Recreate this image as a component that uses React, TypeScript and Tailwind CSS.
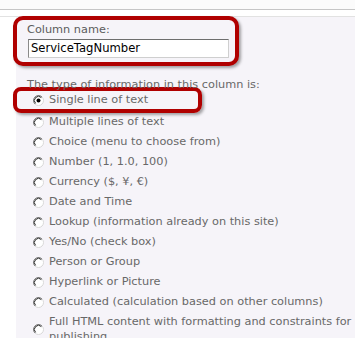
import React from "react"

function Radio({ checked }: { checked?: boolean }) {
    return (
        <svg width="11" height="11" viewBox="0 0 11 11" className="shrink-0">
            <circle cx="5.5" cy="5.5" r="5" fill="#ffffff" />
            <path d="M1.96 9.04A5 5 0 0 1 9.04 1.96" fill="none" stroke="#7a7a7a" strokeWidth="1" />
            <path d="M2.6 8.4A4.1 4.1 0 0 1 8.4 2.6" fill="none" stroke="#2a2a2a" strokeWidth="1" />
            <path d="M9.04 1.96A5 5 0 0 1 1.96 9.04" fill="none" stroke="#d8d8d8" strokeWidth="1" />
            {checked && <circle cx="5.5" cy="5.5" r="2" fill="#000000" />}
        </svg>
    )
}

const options = [
    "Multiple lines of text",
    "Choice (menu to choose from)",
    "Number (1, 1.0, 100)",
    "Currency ($, ¥, €)",
    "Date and Time",
    "Lookup (information already on this site)",
    "Yes/No (check box)",
    "Person or Group",
    "Hyperlink or Picture",
    "Calculated (calculation based on other columns)",
]

export default function App() {
    return (
        <div className="w-[355px] h-[338px] overflow-hidden bg-white text-[11.3px] text-[#686868]" style={{ fontFamily: '"DejaVu Sans", Verdana, sans-serif' }}>
            <div className="h-[10px] bg-[#fbfbfb] border-b border-[#c6c6c6]" />
            <div className="h-[7px] bg-white border-b border-[#e2e2e2]" />
            <div className="flex h-full">
                <div className="w-[16px] shrink-0 bg-white" />
                <div className="flex-1 bg-[#f6f4f9]">
                    <div className="-ml-[3px] -mt-[1px] w-[226px] h-[50px] border-4 border-[#b00000] rounded-[10px] bg-[#f6f4f9] shadow-[2px_2px_3px_rgba(0,0,0,0.35)] pl-[10px] pt-[3px]">
                        <div className="leading-[13px] text-[#5c5c5c]">Column name:</div>
                        <div className="mt-[3px] ml-[1px] w-[201px] h-[19px] bg-white border border-[#cfcfcf] border-t-[#6e6e6e] border-l-[#8a8a8a] flex items-center pl-[2px] text-[11.6px] text-black">
                            ServiceTagNumber
                        </div>
                    </div>
                    <div className="mt-[12px] ml-[11px] leading-[13px]">The type of information in this column is:</div>
                    <div className="-ml-[3px] -mt-[4px] w-[189px] h-[26px] border-4 border-[#b00000] rounded-[8px] shadow-[2px_2px_3px_rgba(0,0,0,0.35)] flex items-center gap-[5px] pl-[16px]">
                        <Radio checked />
                        <span>Single line of text</span>
                    </div>
                    <div className="-mt-[1px]">
                        {options.map((o) => (
                            <div key={o} className="h-[20px] flex items-center gap-[5px] pl-[17px]">
                                <Radio />
                                <span>{o}</span>
                            </div>
                        ))}
                        <div className="flex items-center gap-[5px] pl-[17px] pt-[2px]">
                            <Radio />
                            <span className="leading-[15px]">
                                Full HTML content with formatting and constraints for
                                <br />
                                publishing
                            </span>
                        </div>
                    </div>
                </div>
            </div>
        </div>
    )
}
